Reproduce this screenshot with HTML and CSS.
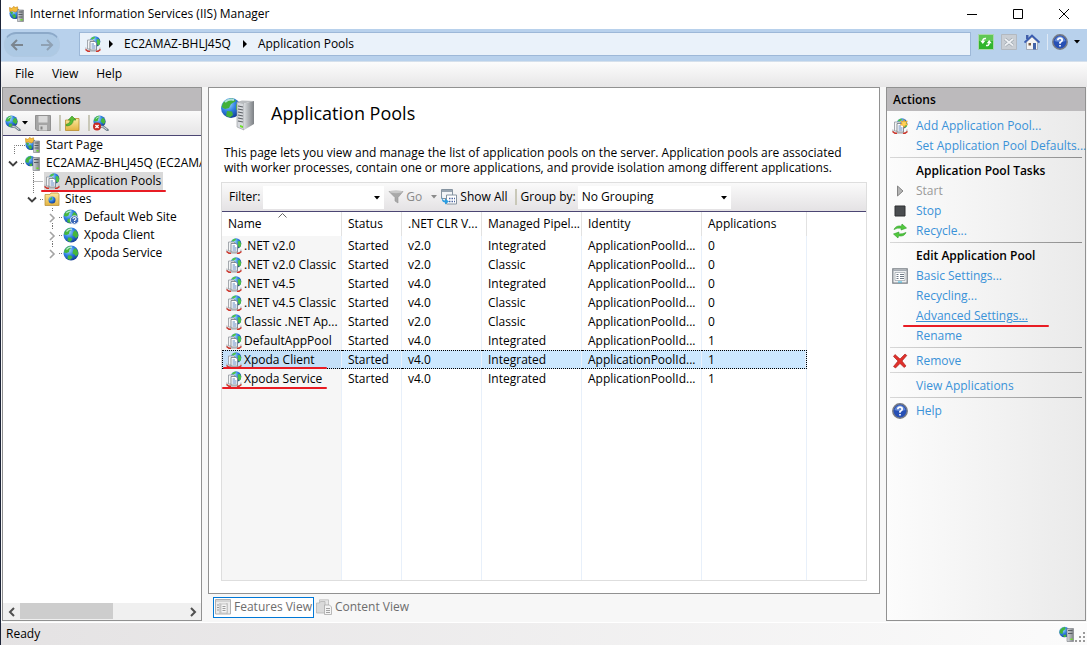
FILE: index.html
```
<!DOCTYPE html>
<html lang="en">

<head>
    <meta charset="UTF-8">
    <meta name="viewport" content="width=device-width, initial-scale=1.0">
    <title>Internet Information Services (IIS) Manager</title>
    <link rel="stylesheet" href="styles.css">
</head>

<body>
    <!-- icon sprite -->
    <svg class="sprite" aria-hidden="true">
        <defs>
            <radialGradient id="ball" cx="35%" cy="30%" r="75%">
                <stop offset="0" stop-color="#a6dcff" />
                <stop offset="0.5" stop-color="#2f80e2" />
                <stop offset="1" stop-color="#123a94" />
            </radialGradient>
            <linearGradient id="metal" x1="0" x2="1">
                <stop offset="0" stop-color="#d9dcdf" />
                <stop offset="1" stop-color="#7c8084" />
            </linearGradient>
            <linearGradient id="gold" x2="0" y2="1">
                <stop offset="0" stop-color="#fdeaa0" />
                <stop offset="1" stop-color="#e3b341" />
            </linearGradient>
            <symbol id="i-globe" viewBox="0 0 16 16">
                <circle cx="8" cy="8" r="7.500" fill="url(#ball)" />
                <path d="M1.500 5Q4 1 7 1L8.500 2.500 6.500 4.500 6 7 3.500 8 1 7.500ZM10 5.500L12 3 14.500 5.500 15.200 9 13 11.500 11.500 9.500 9.500 8.500ZM5 10.500L8 10.500 9.500 12.500 7 15 4.500 13.800Z" fill="#45b83c" />
                <path d="M3.500 4.500Q6 1.800 9 2.300" stroke="#d5f3ff" fill="none" stroke-width="1.200" opacity="0.800" />
            </symbol>
            <symbol id="i-server" viewBox="0 0 16 16">
                <circle cx="5.500" cy="6" r="5.300" fill="url(#ball)" />
                <path d="M1 4Q3 1 6 1L6.500 3 4 5 3.500 8 .5 7ZM4 9L7 8.500V11H5Z" fill="#42b53b" />
                <path d="M8 2.500h6.500v13H8z" fill="url(#metal)" stroke="#777b80" stroke-width="0.600" />
                <path d="M9 4.500h4.500M9 7.500h4.500" stroke="#4e5358" stroke-width="0.900" />
                <path d="M11.500 12.500h2v1.500h-2z" fill="#6be31c" />
            </symbol>
            <symbol id="i-start" viewBox="0 0 16 16">
                <circle cx="6" cy="7.500" r="5.500" fill="url(#ball)" />
                <path d="M3 9L6 8 7 11 5 12.800ZM1 6L4 6 3 9Z" fill="#42b53b" />
                <path d="M.5 1.500L3 2.500 4.500.5 6.500 1.500 8.500.8 9 4.500 6.500 6 3.500 5 .8 5.500Z" fill="#f7bd3a" stroke="#c58518" stroke-width="0.600" />
                <path d="M8.500 4h6v11.500h-6z" fill="url(#metal)" stroke="#777b80" stroke-width="0.600" />
                <path d="M9.500 6h4M9.500 8.500h4M9.500 11h4" stroke="#4e5358" stroke-width="0.900" />
                <path d="M11.500 13h2v1.500h-2z" fill="#6be31c" />
            </symbol>
            <symbol id="i-pool" viewBox="0 0 16 16">
                <circle cx="10" cy="5.500" r="5.300" fill="url(#ball)" />
                <path d="M5.500 3Q7 .5 9.500.5L10 2 7.500 3.500ZM11.500 3.500L14 3 15.200 6 14.500 9 12.500 9.500Z" fill="#4cc443" />
                <path d="M.8 11.500Q.5 14.800 4 15.200H12Q15.300 14.800 15 11.500" stroke="#b9bcc0" stroke-width="1.200" fill="none" />
                <path d="M.5 13.500l2.500 1.800h2M15.500 13.500l-2.500 1.800h-2" stroke="#d0352a" stroke-width="1.500" fill="none" />
                <path d="M2.500 4h6v9h-6z" fill="#f3f5f6" stroke="#90969c" stroke-width="0.800" />
                <path d="M5 5.500h5l1.500 1.500v7h-6.500z" fill="#fff" stroke="#7b828a" stroke-width="0.900" />
                <path d="M6.500 8h2.500M6.500 10h4M6.500 12h4" stroke="#4c79b8" stroke-width="0.900" />
            </symbol>
            <symbol id="i-pool-add" viewBox="0 0 16 16">
                <use href="#i-pool" />
                <path d="M12 1.500l.8 2.200 2.600-.7-1.400 2.200 1.700 1.800-2.500.2L12 9.500l-1.200-2.300-2.500-.2 1.700-1.800-1.200-2.200 2.400.7z" fill="#ffd35a" stroke="#ee9a20" stroke-width="0.600" />
            </symbol>
            <symbol id="i-sites" viewBox="0 0 16 16">
                <path d="M1 3.500h5l1-1.500h7l1 1.500v11H1z" fill="url(#gold)" stroke="#bb9440" stroke-width="0.800" />
                <circle cx="8" cy="9" r="3.500" fill="url(#ball)" />
                <path d="M5.500 8l2-2 1 1.500-1.500 2z" fill="#46b83f" />
            </symbol>
            <symbol id="i-globe-q" viewBox="0 0 16 16">
                <use href="#i-globe" width="15" height="15" />
                <circle cx="11.500" cy="11" r="4.200" fill="#3c67b8" stroke="#dfe8f5" />
                <path d="M10 10Q10 8.500 11.500 8.500T13 10Q13 10.700 11.500 11.500V12M11.500 12.900v1" stroke="#fff" fill="none" stroke-width="1.100" />
            </symbol>
            <symbol id="i-help" viewBox="0 0 16 16">
                <circle cx="8" cy="8" r="7.200" fill="#264fb5" stroke="#777b84" stroke-width="1.500" />
                <path d="M2.500 7Q4 2.300 8 2.300T13.500 7Q8 9 2.500 7Z" fill="#7c9fe4" opacity="0.700" />
                <path d="M5.800 6.300Q5.800 4.200 8 4.200T10.200 6.200Q10.200 7.300 8 8.600V9.800M8 11v1.600" stroke="#fff" stroke-width="1.700" fill="none" />
            </symbol>
            <symbol id="i-connect" viewBox="0 0 16 16">
                <use href="#i-globe" width="13" height="13" />
                <path d="M7.500 11.500l3 .5 4 3" stroke="#73818e" stroke-width="2.600" fill="none" stroke-linecap="round" />
                <path d="M7.500 11.500l3 .5 3.500 2.500" stroke="#d4dce3" stroke-width="1" fill="none" />
            </symbol>
            <symbol id="i-disconnect" viewBox="0 0 16 16">
                <use href="#i-connect" />
                <circle cx="4" cy="11.500" r="4" fill="#c92a22" />
                <path d="M2.400 9.900l3.200 3.200M5.600 9.900l-3.200 3.200" stroke="#fff" stroke-width="1.400" />
            </symbol>
            <symbol id="i-save" viewBox="0 0 16 16">
                <path d="M.5.500h15v15H2l-1.500-1.500z" fill="#a5a5a5" stroke="#919191" />
                <path d="M3.500 1h9v6.500h-9z" fill="#dadada" />
                <path d="M4 10h8v5.500H4z" fill="#d2d2d2" />
                <path d="M5.500 11.500h2v3h-2z" fill="#858585" />
            </symbol>
            <symbol id="i-up" viewBox="0 0 16 16">
                <path d="M1.500 5H9l1-1.500h5v12H1.500z" fill="url(#gold)" stroke="#b98e31" stroke-width="0.800" />
                <path d="M2 9.500Q6 9 6.500 5H4.300L8 1l4 4H9.300Q9 10.500 2.500 11Z" fill="#58bd35" stroke="#2f8a22" stroke-width="0.600" />
            </symbol>
            <symbol id="i-filter" viewBox="0 0 16 16">
                <path d="M1 2.500h14L10 8.500V14l-3-2V8.500z" fill="#a9a9a9" stroke="#969696" stroke-width="0.600" />
                <ellipse cx="8" cy="2.700" rx="6.500" ry="1.500" fill="#c9c9c9" />
            </symbol>
            <symbol id="i-showall" viewBox="0 0 16 16">
                <path d="M.5.500h11v9H.500z" fill="#f3f5f7" stroke="#8593a0" />
                <path d="M1 2h10" stroke="#98a4b0" stroke-width="2" />
                <path d="M5.500 6h10v9h-10z" fill="#fff" stroke="#8593a0" />
                <path d="M8 9.500h6M8 12.500h6" stroke="#4e66a0" stroke-width="1.500" stroke-dasharray="1.500 1" />
                <path d="M1 7Q1 11.500 4 11.500V9.500L8 12.500 4 15.500V13.500Q0 13.500 1 7Z" fill="#2b9de0" />
            </symbol>
            <symbol id="i-refresh" viewBox="0 0 16 16">
                <path d="M.5.500h15v15H.500z" fill="#31b52c" stroke="#a9d8a9" />
                <path d="M1 1h14v6H1z" fill="#8fdc7e" opacity="0.500" />
                <path d="M8 4.500Q5 4 4.800 7M8 11.500Q11 12 11.200 9" stroke="#fff" stroke-width="1.500" fill="none" />
                <path d="M2.300 6.800h5L4.800 10zM8.700 9.200h5L11.200 6z" fill="#fff" />
            </symbol>
            <symbol id="i-cancel" viewBox="0 0 16 16">
                <path d="M.5.500h15v15H.500z" fill="#c9ced4" stroke="#b3b9c0" />
                <path d="M4 5l8 6.500M12 5L4 11.500" stroke="#9aa3ac" stroke-width="3" />
                <path d="M4 5l8 6.500M12 5L4 11.500" stroke="#eef1f4" stroke-width="1.800" />
            </symbol>
            <symbol id="i-home" viewBox="0 0 16 16">
                <path d="M2 1h2.500v4H2z" fill="#425fa9" />
                <path d="M2.500 8L8 3l5.500 5v7.500h-11z" fill="#f4f4f4" stroke="#8c95a2" stroke-width="0.700" />
                <path d="M.5 8.500L8 1.500l7.500 7" stroke="#3a5cb0" stroke-width="1.800" fill="none" />
                <path d="M9 9h3v6.500H9z" fill="#4263a8" />
                <path d="M4.500 9h2.500v2.500H4.500z" fill="#7b5e46" />
            </symbol>
            <symbol id="i-recycle" viewBox="0 0 16 16">
                <path d="M2 6.500Q4 2 9.500 3.200L10 1l4.500 4-5.500 2 .4-1.800Q5.500 4.500 2 6.500ZM14 9.500Q12 14 6.500 12.800L6 15l-4.500-4 5.500-2-.4 1.800Q10.500 11.500 14 9.500Z" fill="#52ca3c" stroke="#2b9a26" stroke-width="0.600" />
            </symbol>
            <symbol id="i-settings" viewBox="0 0 16 16">
                <path d="M.8.800h14.400v14.400H.800z" fill="#eef0f2" stroke="#777d84" stroke-width="1.200" />
                <path d="M1 2.500h14" stroke="#a4abb3" />
                <path d="M3 4.500h10v8H3z" fill="#fff" stroke="#9aa1a8" stroke-width="0.700" />
                <path d="M4.500 6.500h2M4.500 8.500h2M4.500 10.500h2M8 6.500h4M8 8.500h4M8 10.500h4" stroke="#5d6a78" stroke-width="0.900" />
                <path d="M6 14h4" stroke="#39b8e0" />
            </symbol>
            <symbol id="i-remove" viewBox="0 0 16 16">
                <path d="M3 1.500L8 6l5-5 1.800 1.500L10 8l4 5-1.800 1.500L8 10.500 3.500 15l-2-1.500L6 8 1.500 3.500Z" fill="#e0302b" stroke="#a51512" stroke-width="0.600" />
            </symbol>
            <symbol id="i-features" viewBox="0 0 16 16">
                <path d="M.5.500h15v14.500H.500z" fill="#ececec" stroke="#b0b0b0" />
                <path d="M1 2h14M5 4v11M12 4v11" stroke="#bcbcbc" stroke-width="1.200" />
                <path d="M6 5h6v9H6z" fill="#f6f6f6" stroke="#b6b6b6" stroke-width="0.700" />
                <path d="M2 6h2M2 8.500h2M2 11h2M7.500 7.500h3M7.500 9.500h3M7.500 11.500h3" stroke="#9b9b9b" />
            </symbol>
            <symbol id="i-content" viewBox="0 0 16 16">
                <path d="M3.500.800h9v9h-9z" fill="#e8e8e8" stroke="#bbb" stroke-width="0.800" />
                <path d="M.5 4h3l1-1.500h4.500V14H.500z" fill="#dadada" stroke="#b5b5b5" stroke-width="0.800" />
                <path d="M8.500 6h5l2 2v7.500h-7z" fill="#f4f4f4" stroke="#aaa" stroke-width="0.800" />
                <path d="M10 9.500h4M10 11.500h4M10 13.500h4" stroke="#999" stroke-width="0.900" />
            </symbol>
            <symbol id="i-down" viewBox="0 0 6 4">
                <path d="M0 0h6L3 3.500z" fill="currentColor" />
            </symbol>
            <symbol id="i-open" viewBox="0 0 10 8">
                <path d="M1 1.500l4 4 4-4" fill="none" stroke="#404040" stroke-width="1.800" />
            </symbol>
            <symbol id="i-closed" viewBox="0 0 8 10">
                <path d="M2 1l4 4-4 4" fill="none" stroke="#a3a3a3" stroke-width="1.600" />
            </symbol>
        </defs>
    </svg>

    <header class="titlebar">
        <svg class="icon"><use href="#i-start" /></svg>
        <h1>Internet Information Services (IIS) Manager</h1>
        <div class="window-buttons">
            <button aria-label="Minimize"><svg viewBox="0 0 12 12"><path d="M1 6.500h10" /></svg></button>
            <button aria-label="Maximize"><svg viewBox="0 0 12 12"><path d="M1.500 1.500h9v9h-9z" /></svg></button>
            <button aria-label="Close"><svg viewBox="0 0 12 12"><path d="M1 1l10 10M11 1L1 11" /></svg></button>
        </div>
    </header>

    <div class="navbar">
        <div class="history">
            <button aria-label="Back"><svg viewBox="0 0 14 12"><path d="M13 6H2M7 1L2 6l5 5" /></svg></button>
            <button aria-label="Forward" class="dim"><svg viewBox="0 0 14 12"><path d="M1 6h11M7 1l5 5-5 5" /></svg></button>
        </div>
        <nav class="address">
            <svg class="icon"><use href="#i-pool" /></svg>
            <span class="crumb-arrow"></span>
            <a href="#">EC2AMAZ-BHLJ45Q</a>
            <span class="crumb-arrow"></span>
            <a href="#">Application Pools</a>
        </nav>
        <div class="nav-tools">
            <button aria-label="Refresh"><svg class="icon"><use href="#i-refresh" /></svg></button>
            <button aria-label="Stop"><svg class="icon"><use href="#i-cancel" /></svg></button>
            <button aria-label="Home"><svg class="icon"><use href="#i-home" /></svg></button>
            <button class="help" aria-label="Help"><svg class="icon"><use href="#i-help" /></svg><svg class="down"><use href="#i-down" /></svg></button>
        </div>
    </div>

    <div class="menubar">
        <button>File</button>
        <button>View</button>
        <button>Help</button>
    </div>

    <main class="workspace">
        <aside class="panel connections">
            <h2>Connections</h2>
            <div class="tree-tools">
                <button aria-label="Connect"><svg class="icon"><use href="#i-connect" /></svg><svg class="down"><use href="#i-down" /></svg></button>
                <button aria-label="Save"><svg class="icon"><use href="#i-save" /></svg></button>
                <span class="sep"></span>
                <button aria-label="Up"><svg class="icon"><use href="#i-up" /></svg></button>
                <span class="sep"></span>
                <button aria-label="Disconnect"><svg class="icon"><use href="#i-disconnect" /></svg></button>
            </div>
            <ul class="tree">
                <li class="level-1">
                    <svg class="lines"><path d="M11.500 18V9.500H22" /></svg>
                    <svg class="icon"><use href="#i-start" /></svg>
                    <span>Start Page</span>
                </li>
                <li class="level-1">
                    <svg class="lines"><path d="M18 9.500h4" /><use href="#i-open" x="5" y="6" width="10" height="8" /></svg>
                    <svg class="icon"><use href="#i-server" /></svg>
                    <span>EC2AMAZ-BHLJ45Q (EC2AMA</span>
                </li>
                <li class="level-2 selected">
                    <svg class="lines"><path d="M30.500 0v18M30.500 9.500h10" /></svg>
                    <span class="node"><svg class="icon"><use href="#i-pool" /></svg>
                    <span>Application Pools</span></span>
                </li>
                <li class="level-2">
                    <svg class="lines"><path d="M30.500 0v3M37 9.500h4" /><use href="#i-open" x="24" y="6" width="10" height="8" /></svg>
                    <svg class="icon"><use href="#i-sites" /></svg>
                    <span>Sites</span>
                </li>
                <li class="level-3">
                    <svg class="lines"><path d="M49.500 0v3M49.500 15v3M56 9.500h4" /><use href="#i-closed" x="45" y="5" width="8" height="10" /></svg>
                    <svg class="icon"><use href="#i-globe-q" /></svg>
                    <span>Default Web Site</span>
                </li>
                <li class="level-3">
                    <svg class="lines"><path d="M49.500 0v3M49.500 15v3M56 9.500h4" /><use href="#i-closed" x="45" y="5" width="8" height="10" /></svg>
                    <svg class="icon"><use href="#i-globe" /></svg>
                    <span>Xpoda Client</span>
                </li>
                <li class="level-3">
                    <svg class="lines"><path d="M49.500 0v3M56 9.500h4" /><use href="#i-closed" x="45" y="5" width="8" height="10" /></svg>
                    <svg class="icon"><use href="#i-globe" /></svg>
                    <span>Xpoda Service</span>
                </li>
            </ul>
            <div class="scrollbar">
                <button aria-label="Scroll left"><svg viewBox="0 0 8 10"><path d="M6 1L2 5l4 4" /></svg></button>
                <div class="track"><div class="thumb"></div></div>
                <button aria-label="Scroll right"><svg viewBox="0 0 8 10"><path d="M2 1l4 4-4 4" /></svg></button>
            </div>
        </aside>

        <section class="center">
            <div class="panel page">
                <div class="page-head">
                    <svg viewBox="0 0 34 34">
                        <circle cx="10" cy="11" r="10" fill="url(#ball)" />
                        <path d="M2 6Q6 1 12 1.500L15 4 10 7 8 11 4 12 .5 10ZM6 14L11 14.500 12 18 9 20.500 5 19ZM15 7l4 1v4l-4 1z" fill="#43b13a" />
                        <path d="M4 5Q8 1.500 13 3" stroke="#c9efff" stroke-width="2" fill="none" opacity="0.800" />
                        <path d="M16 5l7 1.500V33l-7-3z" fill="#d7dade" stroke="#909499" stroke-width="0.600" />
                        <path d="M16 5l5-1.500L33 4l-10 2.500z" fill="#b8bbbe" />
                        <path d="M23 6.500L33 4v23l-10 6z" fill="url(#metal)" />
                        <path d="M17 9l5 1M17 12l5 1M17 15l5 1M17 18l5 1M17 21l5 1M17 24l5 1" stroke="#5c6065" stroke-width="1.200" />
                        <path d="M19 28l3 1v2l-3-1z" fill="#6cdf24" />
                    </svg>
                    <h2>Application Pools</h2>
                </div>
                <p>This page lets you view and manage the list of application pools on the server. Application pools are associated with worker processes, contain one or more applications, and provide isolation among different applications.</p>

                <div class="list">
                    <div class="list-tools">
                        <label for="filter">Filter:</label>
                        <div class="combo filter">
                            <input type="text" id="filter">
                            <svg class="down"><use href="#i-down" /></svg>
                        </div>
                        <button class="go" disabled><svg class="icon"><use href="#i-filter" /></svg>Go<svg class="down"><use href="#i-down" /></svg></button>
                        <button class="show-all"><svg class="icon"><use href="#i-showall" /></svg>Show All</button>
                        <span class="sep"></span>
                        <label for="group">Group by:</label>
                        <div class="combo group">
                            <select id="group">
                                <option>No Grouping</option>
                            </select>
                            <svg class="down"><use href="#i-down" /></svg>
                        </div>
                    </div>
                    <div class="table-wrap">
                        <table>
                            <colgroup>
                                <col class="c-name">
                                <col class="c-status">
                                <col class="c-clr">
                                <col class="c-mode">
                                <col class="c-identity">
                                <col class="c-apps">
                                <col>
                            </colgroup>
                            <thead>
                                <tr>
                                    <th>Name<svg class="sort" viewBox="0 0 9 5"><path d="M.5 4.500l4-4 4 4" /></svg></th>
                                    <th>Status</th>
                                    <th>.NET CLR V...</th>
                                    <th>Managed Pipel...</th>
                                    <th>Identity</th>
                                    <th>Applications</th>
                                    <th></th>
                                </tr>
                            </thead>
                            <tbody>
                                <tr><td><svg class="icon"><use href="#i-pool" /></svg>.NET v2.0</td><td>Started</td><td>v2.0</td><td>Integrated</td><td>ApplicationPoolId...</td><td>0</td><td></td></tr>
                                <tr><td><svg class="icon"><use href="#i-pool" /></svg>.NET v2.0 Classic</td><td>Started</td><td>v2.0</td><td>Classic</td><td>ApplicationPoolId...</td><td>0</td><td></td></tr>
                                <tr><td><svg class="icon"><use href="#i-pool" /></svg>.NET v4.5</td><td>Started</td><td>v4.0</td><td>Integrated</td><td>ApplicationPoolId...</td><td>0</td><td></td></tr>
                                <tr><td><svg class="icon"><use href="#i-pool" /></svg>.NET v4.5 Classic</td><td>Started</td><td>v4.0</td><td>Classic</td><td>ApplicationPoolId...</td><td>0</td><td></td></tr>
                                <tr><td><svg class="icon"><use href="#i-pool" /></svg>Classic .NET Ap...</td><td>Started</td><td>v2.0</td><td>Classic</td><td>ApplicationPoolId...</td><td>0</td><td></td></tr>
                                <tr><td><svg class="icon"><use href="#i-pool" /></svg>DefaultAppPool</td><td>Started</td><td>v4.0</td><td>Integrated</td><td>ApplicationPoolId...</td><td>1</td><td></td></tr>
                                <tr class="selected marked"><td><svg class="icon"><use href="#i-pool" /></svg>Xpoda Client</td><td>Started</td><td>v4.0</td><td>Integrated</td><td>ApplicationPoolId...</td><td>1</td><td></td></tr>
                                <tr class="marked"><td><svg class="icon"><use href="#i-pool" /></svg>Xpoda Service</td><td>Started</td><td>v4.0</td><td>Integrated</td><td>ApplicationPoolId...</td><td>1</td><td></td></tr>
                                <tr class="filler"><td></td><td></td><td></td><td></td><td></td><td></td><td></td></tr>
                            </tbody>
                        </table>
                    </div>
                </div>
            </div>
            <div class="views">
                <button class="active"><svg class="icon"><use href="#i-features" /></svg>Features View</button>
                <button><svg class="icon"><use href="#i-content" /></svg>Content View</button>
            </div>
        </section>

        <aside class="panel actions">
            <h2>Actions</h2>
            <ul>
                <li><svg class="icon"><use href="#i-pool-add" /></svg><a href="#">Add Application Pool...</a></li>
                <li><a href="#">Set Application Pool Defaults...</a></li>
            </ul>
            <hr>
            <h3>Application Pool Tasks</h3>
            <ul>
                <li class="disabled"><svg class="icon" viewBox="0 0 16 16"><path d="M5.500 3l5.500 5-5.500 5z" fill="#b5b5b5" stroke="#858585" /></svg><span>Start</span></li>
                <li><svg class="icon" viewBox="0 0 16 16"><path d="M3 3h10v10H3z" fill="#4a4d50" stroke="#2f3133" /></svg><a href="#">Stop</a></li>
                <li><svg class="icon"><use href="#i-recycle" /></svg><a href="#">Recycle...</a></li>
            </ul>
            <hr>
            <h3>Edit Application Pool</h3>
            <ul>
                <li><svg class="icon"><use href="#i-settings" /></svg><a href="#">Basic Settings...</a></li>
                <li><a href="#">Recycling...</a></li>
                <li class="hovered"><a href="#">Advanced Settings...</a></li>
                <li><a href="#">Rename</a></li>
            </ul>
            <hr>
            <ul>
                <li><svg class="icon"><use href="#i-remove" /></svg><a href="#">Remove</a></li>
            </ul>
            <hr>
            <ul>
                <li><a href="#">View Applications</a></li>
            </ul>
            <hr>
            <ul>
                <li><svg class="icon"><use href="#i-help" /></svg><a href="#">Help</a></li>
            </ul>
        </aside>
    </main>

    <footer class="statusbar">
        <span>Ready</span>
        <svg class="icon"><use href="#i-server" /></svg>
        <svg class="grip" viewBox="0 0 12 12"><path d="M8 0h2v2H8zM4 4h2v2H4zM8 4h2v2H8zM0 8h2v2H0zM4 8h2v2H4zM8 8h2v2H8z" /></svg>
    </footer>
</body>

</html>
```
FILE: styles.css
```
* {
    margin: 0;
    padding: 0;
    box-sizing: border-box;
}

body {
    height: 100vh;
    display: flex;
    flex-direction: column;
    overflow: hidden;
    font-family: 'Open Sans', 'Noto Sans', sans-serif;
    font-size: 12px;
    line-height: 16px;
    color: #000;
    background-color: #f7f7f7;
    border-left: 1px solid #1d2438;
}

button,
input,
select {
    font: inherit;
    color: inherit;
    background: none;
    border: none;
}

button {
    display: flex;
    align-items: center;
    white-space: nowrap;
}

ul {
    list-style: none;
}

a {
    color: inherit;
    text-decoration: none;
}

svg {
    display: block;
    flex-shrink: 0;
}

.sprite {
    position: absolute;
    width: 0;
    height: 0;
}

.icon {
    width: 16px;
    height: 16px;
}

.down {
    width: 6px;
    height: 4px;
}

/* title bar */
.titlebar {
    height: 29px;
    display: flex;
    align-items: center;
    background-color: #fff;
    padding: 0 0 2px 8px;
}

.titlebar h1 {
    font-size: 12px;
    font-weight: normal;
    margin-left: 5px;
    flex: 1;
}

.window-buttons {
    display: flex;
}

.window-buttons button {
    width: 46px;
    height: 27px;
    justify-content: center;
}

.window-buttons svg {
    width: 12px;
    height: 12px;
    fill: none;
    stroke: #000;
}

/* address bar */
.navbar {
    height: 33px;
    display: flex;
    align-items: flex-start;
    padding: 3px 7px 0 3px;
    background-color: #b8d1ec;
    border-bottom: 1px solid #d5e0ec;
}

.history {
    width: 56px;
    height: 25px;
    display: flex;
    align-items: center;
    justify-content: space-between;
    padding: 0 5px;
    margin-right: 19px;
    border-radius: 12px;
    border: 1px solid #b0c9e2;
    border-top: 2px solid #8ca9c9;
    background-color: #adc9e4;
}

.history svg {
    width: 14px;
    height: 12px;
    fill: none;
    stroke: #7b858f;
    stroke-width: 2;
}

.history .dim svg {
    stroke: #8fa1b3;
}

.address {
    flex: 1;
    height: 24px;
    display: flex;
    align-items: center;
    padding-left: 5px;
    background-color: #eaf2fa;
    border: 1px solid #9db8d8;
}

.crumb-arrow {
    border: 4px solid transparent;
    border-left-color: #000;
    border-right-width: 0;
    margin: 0 11px 0 8px;
}

.address a + .crumb-arrow {
    margin-left: 12px;
}

.nav-tools {
    display: flex;
    align-items: center;
    gap: 7px;
    height: 20px;
    margin-left: 7px;
}

.nav-tools .down {
    margin-left: 6px;
}

.help {
    padding-left: 4px;
    border-left: 1px solid #dfe9f5;
}

/* menu */
.menubar {
    height: 25px;
    display: flex;
    gap: 18px;
    padding: 0 0 1px 14px;
    background: linear-gradient(#fcfcfc, #e7e6e7);
}

/* panels */
.workspace {
    flex: 1;
    min-height: 0;
    display: flex;
    padding: 0 1px;
}

.panel {
    border: 1px solid #919191;
}

.panel > h2 {
    height: 23px;
    font-size: 12px;
    font-weight: 600;
    line-height: 23px;
    padding-left: 6px;
    background-color: #bcbabc;
}

.sep {
    width: 2px;
    height: 16px;
    background-color: #c9c8b8;
}

.connections {
    width: 200px;
    margin-bottom: 1px;
    display: flex;
    flex-direction: column;
    background-color: #fff;
}

.tree-tools {
    height: 25px;
    display: flex;
    align-items: center;
    padding-left: 2px;
    background: linear-gradient(#fafafa, #e6e5e6);
    border-bottom: 1px solid #4b4673;
}

.tree-tools button:first-child {
    margin-right: 7px;
}

.tree-tools .down {
    margin-left: 1px;
}

.tree-tools .sep {
    margin: 0 3px 0 8px;
}

.tree {
    flex: 1;
    overflow: hidden;
}

.tree li {
    height: 18px;
    display: flex;
    align-items: center;
    gap: 5px;
    white-space: nowrap;
    position: relative;
}

.lines {
    height: 18px;
    margin-right: -5px;
    fill: none;
}

.lines > path {
    stroke: #777;
    stroke-dasharray: 1 1;
}

.level-1 .lines {
    width: 22px;
}

.level-2 .lines {
    width: 41px;
}

.level-3 .lines {
    width: 60px;
}

.node {
    display: flex;
    align-items: center;
    gap: 5px;
    height: 18px;
    padding-right: 2px;
    background-color: #d9d9d9;
    position: relative;
}

/* red marker strokes */
.node::after,
.marked td:first-child::after,
.hovered::after {
    content: "";
    position: absolute;
    height: 2px;
    border-radius: 1px;
    background-color: #e81c24;
    z-index: 1;
}

.node::after {
    left: -3px;
    right: -3px;
    bottom: -2px;
}

.scrollbar {
    height: 17px;
    display: flex;
    background-color: #f0f0f0;
}

.scrollbar button {
    width: 17px;
    justify-content: center;
}

.scrollbar svg {
    width: 8px;
    height: 10px;
    fill: none;
    stroke: #505050;
    stroke-width: 2;
}

.track {
    flex: 1;
}

.thumb {
    width: 57%;
    height: 16px;
    background-color: #cdcdcd;
}

/* center pane */
.center {
    flex: 1;
    min-width: 0;
    display: flex;
    flex-direction: column;
    margin: 0 6px;
}

.page {
    flex: 1;
    min-height: 0;
    display: flex;
    flex-direction: column;
    padding: 0 12px 12px;
    background-color: #fff;
}

.page-head {
    height: 52px;
    display: flex;
    align-items: center;
    gap: 16px;
}

.page-head svg {
    width: 34px;
    height: 34px;
}

.page-head h2 {
    font-size: 18px;
    font-weight: normal;
    line-height: 24px;
    padding-bottom: 2px;
}

.page p {
    line-height: 15px;
    padding: 0 3px;
    margin: 5px 0 7px;
}

.list {
    flex: 1;
    min-height: 0;
    display: flex;
    flex-direction: column;
    border: 1px solid #dedede;
}

.list-tools {
    height: 29px;
    display: flex;
    align-items: center;
    padding-left: 7px;
    background: linear-gradient(#fafafa, #e4e2e4);
    border-bottom: 1px solid #4b4673;
    white-space: nowrap;
}

.combo {
    height: 23px;
    position: relative;
    background-color: #fff;
}

.combo input,
.combo select {
    width: 100%;
    height: 23px;
    padding: 0 4px;
    appearance: none;
}

.combo .down {
    position: absolute;
    right: 4px;
    top: 10px;
}

.filter {
    width: 121px;
    margin: 0 4px 0 3px;
}

.group {
    width: 153px;
    margin-left: 2px;
}

.go {
    width: 49px;
    gap: 2px;
    color: #8a8a8a;
}

.go .down {
    margin-left: auto;
}

.show-all {
    gap: 3px;
    margin-left: 4px;
}

.list-tools .sep {
    margin: 0 4px 0 7px;
}

.table-wrap {
    flex: 1;
    min-height: 0;
}

table {
    width: 100%;
    height: 100%;
    table-layout: fixed;
    border-collapse: separate;
    border-spacing: 0;
}

.c-name {
    width: 120px;
}

.c-status {
    width: 60px;
}

.c-clr {
    width: 80px;
}

.c-mode {
    width: 100px;
}

.c-identity {
    width: 120px;
}

.c-apps {
    width: 105px;
}

th,
td {
    height: 19px;
    text-align: left;
    font-weight: normal;
    line-height: 18px;
    padding-left: 6px;
    white-space: nowrap;
    box-shadow: inset -1px 0 #e8f0fa;
    position: relative;
}

th {
    height: 24px;
    box-shadow: inset -1px 0 #e2e2e2;
}

th:last-child,
td:last-child {
    box-shadow: none;
}

td:first-child {
    background-color: #f6f6f6;
    padding-left: 4px;
}

td .icon {
    float: left;
    margin: 1px 2px 0 0;
}

.filler td {
    height: auto;
}

.sort {
    position: absolute;
    top: 1px;
    left: 56px;
    width: 9px;
    height: 5px;
    fill: none;
    stroke: #666;
}

tr.selected td:not(:last-child) {
    background-color: #cce8ff;
    border-top: 1px dotted #000;
    border-bottom: 1px dotted #000;
    line-height: 16px;
}

tr.selected td:first-child {
    background-color: #c4e0f8;
    border-left: 1px dotted #000;
    padding-left: 3px;
}

tr.selected td:nth-child(6) {
    border-right: 1px dotted #000;
}

tr.selected .icon {
    margin-top: 0;
}

.marked td:first-child::after {
    left: 0;
    right: 15px;
    bottom: -1px;
}

/* view tabs */
.views {
    height: 28px;
    display: flex;
    align-items: center;
    padding: 0 5px 2px;
    color: #6d6d6d;
}

.views button {
    height: 21px;
    padding: 0 1px;
    gap: 3px;
    border: 1px solid transparent;
}

.views .active {
    background-color: #fff;
    border-color: #0078d7;
}

/* actions */
.actions {
    width: 200px;
    margin-bottom: 1px;
    background: linear-gradient(90deg, #fcfcfc, #eaeaea);
}

.actions > h2 {
    margin-bottom: 5px;
}

.actions li,
.actions h3 {
    height: 20px;
    font-size: 12px;
    line-height: 20px;
    padding-left: 29px;
    white-space: nowrap;
    position: relative;
}

.actions h3 {
    font-weight: 600;
}

.actions a {
    color: #3a92d8;
}

.actions .icon {
    float: left;
    margin: 2px 7px 0 -24px;
}

.actions hr {
    height: 1px;
    border: none;
    margin: 1px 3px 3px;
    background: linear-gradient(90deg, #d8d8d8, #8c8c8c);
}

.actions .disabled {
    color: #9a9a9a;
}

.hovered a {
    text-decoration: underline;
}

.hovered::after {
    left: 16px;
    right: 36px;
    bottom: -1px;
}

/* status bar */
.statusbar {
    height: 23px;
    display: flex;
    align-items: center;
    padding: 0 0 0 5px;
    background: linear-gradient(90deg, #e4e2e3, #fbfbfb);
    border-top: 1px solid #fff;
}

.statusbar span {
    flex: 1;
}

.grip {
    width: 12px;
    height: 12px;
    fill: #9a9a9a;
    margin-top: 8px;
}
```
